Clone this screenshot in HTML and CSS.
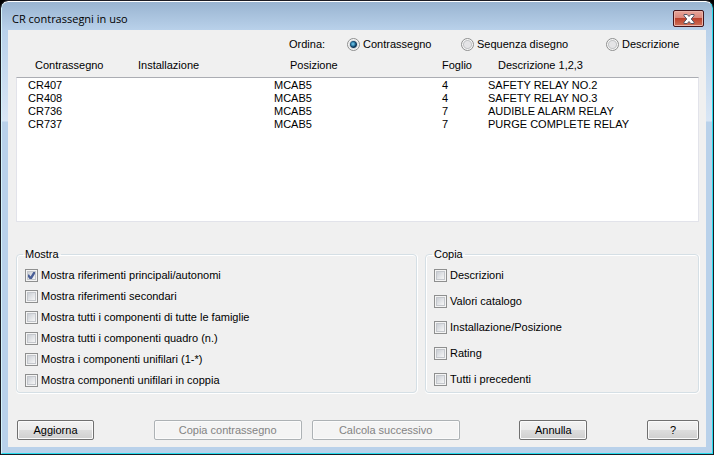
FILE: index.html
```html
<!DOCTYPE html>
<html lang="it">
<head>
    <meta charset="UTF-8">
    <meta name="viewport" content="width=device-width, initial-scale=1.0">
    <title>CR contrassegni in uso</title>
    <link rel="stylesheet" href="styles.css">
</head>
<body>

<div class="window">
    <header class="titlebar">
        <h1>CR contrassegni in uso</h1>
        <button type="button" class="close" aria-label="Chiudi">
            <svg width="12" height="10" viewBox="0 0 12 10">
                <path d="M1 .5h3.200l1.800 2 1.800-2H11v1.300L8.200 5 11 8.200v1.300H7.800L6 7.500l-1.800 2H1V8.200L3.800 5 1 1.800z" fill="#fff" stroke="#535666" stroke-width="1"/>
            </svg>
        </button>
    </header>

    <form class="content">
        <div class="sort" role="radiogroup" aria-labelledby="sort-label">
            <span id="sort-label" class="sort-label">Ordina:</span>
            <label class="option"><input type="radio" name="sort" checked>Contrassegno</label>
            <label class="option"><input type="radio" name="sort">Sequenza disegno</label>
            <label class="option"><input type="radio" name="sort">Descrizione</label>
        </div>

        <table class="list">
            <thead>
                <tr>
                    <th>Contrassegno</th>
                    <th>Installazione</th>
                    <th>Posizione</th>
                    <th>Foglio</th>
                    <th>Descrizione 1,2,3</th>
                </tr>
            </thead>
            <tbody>
                <tr>
                    <td>CR407</td>
                    <td></td>
                    <td>MCAB5</td>
                    <td>4</td>
                    <td>SAFETY RELAY NO.2</td>
                </tr>
                <tr>
                    <td>CR408</td>
                    <td></td>
                    <td>MCAB5</td>
                    <td>4</td>
                    <td>SAFETY RELAY NO.3</td>
                </tr>
                <tr>
                    <td>CR736</td>
                    <td></td>
                    <td>MCAB5</td>
                    <td>7</td>
                    <td>AUDIBLE ALARM RELAY</td>
                </tr>
                <tr>
                    <td>CR737</td>
                    <td></td>
                    <td>MCAB5</td>
                    <td>7</td>
                    <td>PURGE COMPLETE RELAY</td>
                </tr>
            </tbody>
        </table>

        <div class="groups">
            <fieldset class="group show">
                <legend>Mostra</legend>
                <label class="option"><input type="checkbox" checked>Mostra riferimenti principali/autonomi</label>
                <label class="option"><input type="checkbox">Mostra riferimenti secondari</label>
                <label class="option"><input type="checkbox">Mostra tutti i componenti di tutte le famiglie</label>
                <label class="option"><input type="checkbox">Mostra tutti i componenti quadro (n.)</label>
                <label class="option"><input type="checkbox">Mostra i componenti unifilari (1-*)</label>
                <label class="option"><input type="checkbox">Mostra componenti unifilari in coppia</label>
            </fieldset>
            <fieldset class="group copy">
                <legend>Copia</legend>
                <label class="option"><input type="checkbox">Descrizioni</label>
                <label class="option"><input type="checkbox">Valori catalogo</label>
                <label class="option"><input type="checkbox">Installazione/Posizione</label>
                <label class="option"><input type="checkbox">Rating</label>
                <label class="option"><input type="checkbox">Tutti i precedenti</label>
            </fieldset>
        </div>

        <div class="buttons">
            <button type="button" class="btn refresh">Aggiorna</button>
            <div class="pair">
                <button type="button" class="btn wide" disabled>Copia contrassegno</button>
                <button type="button" class="btn wide" disabled>Calcola successivo</button>
            </div>
            <button type="button" class="btn cancel">Annulla</button>
            <button type="button" class="btn help">?</button>
        </div>
    </form>
</div>

</body>
</html>
```

FILE: styles.css
```css
* {
    box-sizing: border-box;
}
body {
    margin: 0;
    background-color: #000;
    font-family: "Liberation Sans", Arial, sans-serif;
    font-size: 11px;
    line-height: 13px;
    color: #000;
}
.window {
    display: flex;
    flex-direction: column;
    min-height: calc(100vh - 2px);
    margin: 1px;
    padding: 0 6px 6px;
    border: 1px solid #26dcee;
    border-top-color: #fff;
    border-left-color: #d5f4fb;
    border-radius: 7px 7px 0 0;
    outline: 1px solid #1c1c24;
    background: linear-gradient(#99b4d1, #b9d1ea 28px, #d9e6f5 119px, #b9d1ea 120px, #b9d1ea);
}
.titlebar {
    display: flex;
    justify-content: space-between;
    align-items: center;
    height: 28px;
    padding: 5px 2px 0 4px;
}
.titlebar h1 {
    margin: 0;
    font: 11px/16px "Open Sans", sans-serif;
}
.close {
    display: flex;
    justify-content: center;
    align-items: center;
    width: 31px;
    height: 17px;
    padding: 0;
    border: 1px solid #43141a;
    border-radius: 2px;
    background: linear-gradient(#e8a599, #d9867a 48%, #bb402b 50%, #cf7158);
    box-shadow: inset 0 0 0 1px #eab3a8;
}
.content {
    flex: 1;
    padding: 7px 7px 7px 8px;
    background-color: #f0f0f0;
}

/* sort order */
.sort {
    display: flex;
    align-items: center;
    height: 14px;
    padding-left: 273px;
}
.sort-label {
    flex: none;
    width: 58px;
}
.option {
    display: flex;
    align-items: center;
    gap: 3px;
}
.sort .option {
    flex: none;
    width: 114px;
}
.sort .option:nth-of-type(2) {
    width: 145px;
}
.sort .option:last-child {
    width: auto;
}
.option input {
    flex: none;
    appearance: none;
    width: 13px;
    height: 13px;
    margin: 0;
    border: 1px solid #8e8f8f;
}
.option input[type="radio"] {
    border-radius: 50%;
    background: radial-gradient(circle, #e4e4e6 0 3px, #c2c4c6 4px, #f6f6f6 5px);
}
.option input[type="radio"]:checked {
    background: radial-gradient(circle at 5px 5px, #7fd0f0 0, #2a7ca8 2px, transparent 3px),
                radial-gradient(circle, #123a5c 0 3px, #d5d9dc 4px, #f6f6f6 5px);
}
.option input[type="checkbox"] {
    background: linear-gradient(135deg, #cbcfd5, #f6f6f6) content-box, #f4f4f4;
    padding: 2px;
    box-shadow: inset 0 0 0 1px #f4f4f4, inset 0 0 0 2px #c4c7cc;
}
.option input[type="checkbox"]:checked {
    background: url("data:image/svg+xml,%3Csvg xmlns='http://www.w3.org/2000/svg' viewBox='0 0 11 11'%3E%3Cpath d='M2.500 5l2.300 3.200L8.500 2' fill='none' stroke='%234a5f97' stroke-width='2'/%3E%3C/svg%3E") border-box,
                linear-gradient(135deg, #cbcfd5, #f6f6f6) content-box, #f4f4f4;
}

/* list of tags in use */
.list {
    display: block;
    margin-top: 8px;
}
.list thead,
.list tbody {
    display: block;
}
.list tr {
    display: grid;
}
.list thead tr {
    grid-template-columns: 103px 152px 152px 56px 1fr;
    padding-left: 19px;
}
.list tbody tr {
    grid-template-columns: 110px 136px 168px 46px 1fr;
    height: 13px;
    padding-left: 11px;
}
.list th,
.list td {
    padding: 0;
    font-weight: normal;
    text-align: left;
}
.list tbody {
    height: 145px;
    margin-top: 5px;
    padding-top: 1px;
    border: 1px solid #e2e3ea;
    border-top-color: #abadb3;
    background-color: #fff;
    overflow-y: auto;
}

/* option groups */
.groups {
    display: grid;
    grid-template-columns: 401fr 274fr;
    gap: 8px;
    margin-top: 26px;
}
.group {
    display: flex;
    flex-direction: column;
    min-width: 0;
    margin: 0;
    padding: 8px 8px 5px;
    border: 1px solid #d5dfe5;
    border-radius: 4px;
    box-shadow: inset 0 1px #fff, inset 1px 0 #fff, 0 1px #fff, 1px 0 #fff;
}
.group legend {
    height: 13px;
    margin-left: -2px;
    padding: 0 2px;
}
.show {
    gap: 8px;
}
.copy {
    gap: 13px;
}

/* bottom buttons */
.buttons {
    display: flex;
    justify-content: space-between;
    margin-top: 27px;
    padding-left: 1px;
}
.pair {
    display: flex;
    gap: 10px;
}
.btn {
    height: 20px;
    padding: 0;
    border: 1px solid #707070;
    border-radius: 2px;
    background: linear-gradient(#f2f2f2, #ebebeb 50%, #dddddd 50%, #cfcfcf);
    box-shadow: inset 0 0 0 1px #fbfbfb;
    font: inherit;
    color: #000;
}
.btn:disabled {
    border-color: #adb2b5;
    background: #f4f4f4;
    color: #838383;
}
.refresh {
    width: 77px;
}
.wide {
    width: 148px;
}
.cancel {
    width: 68px;
}
.help {
    width: 52px;
}
```
